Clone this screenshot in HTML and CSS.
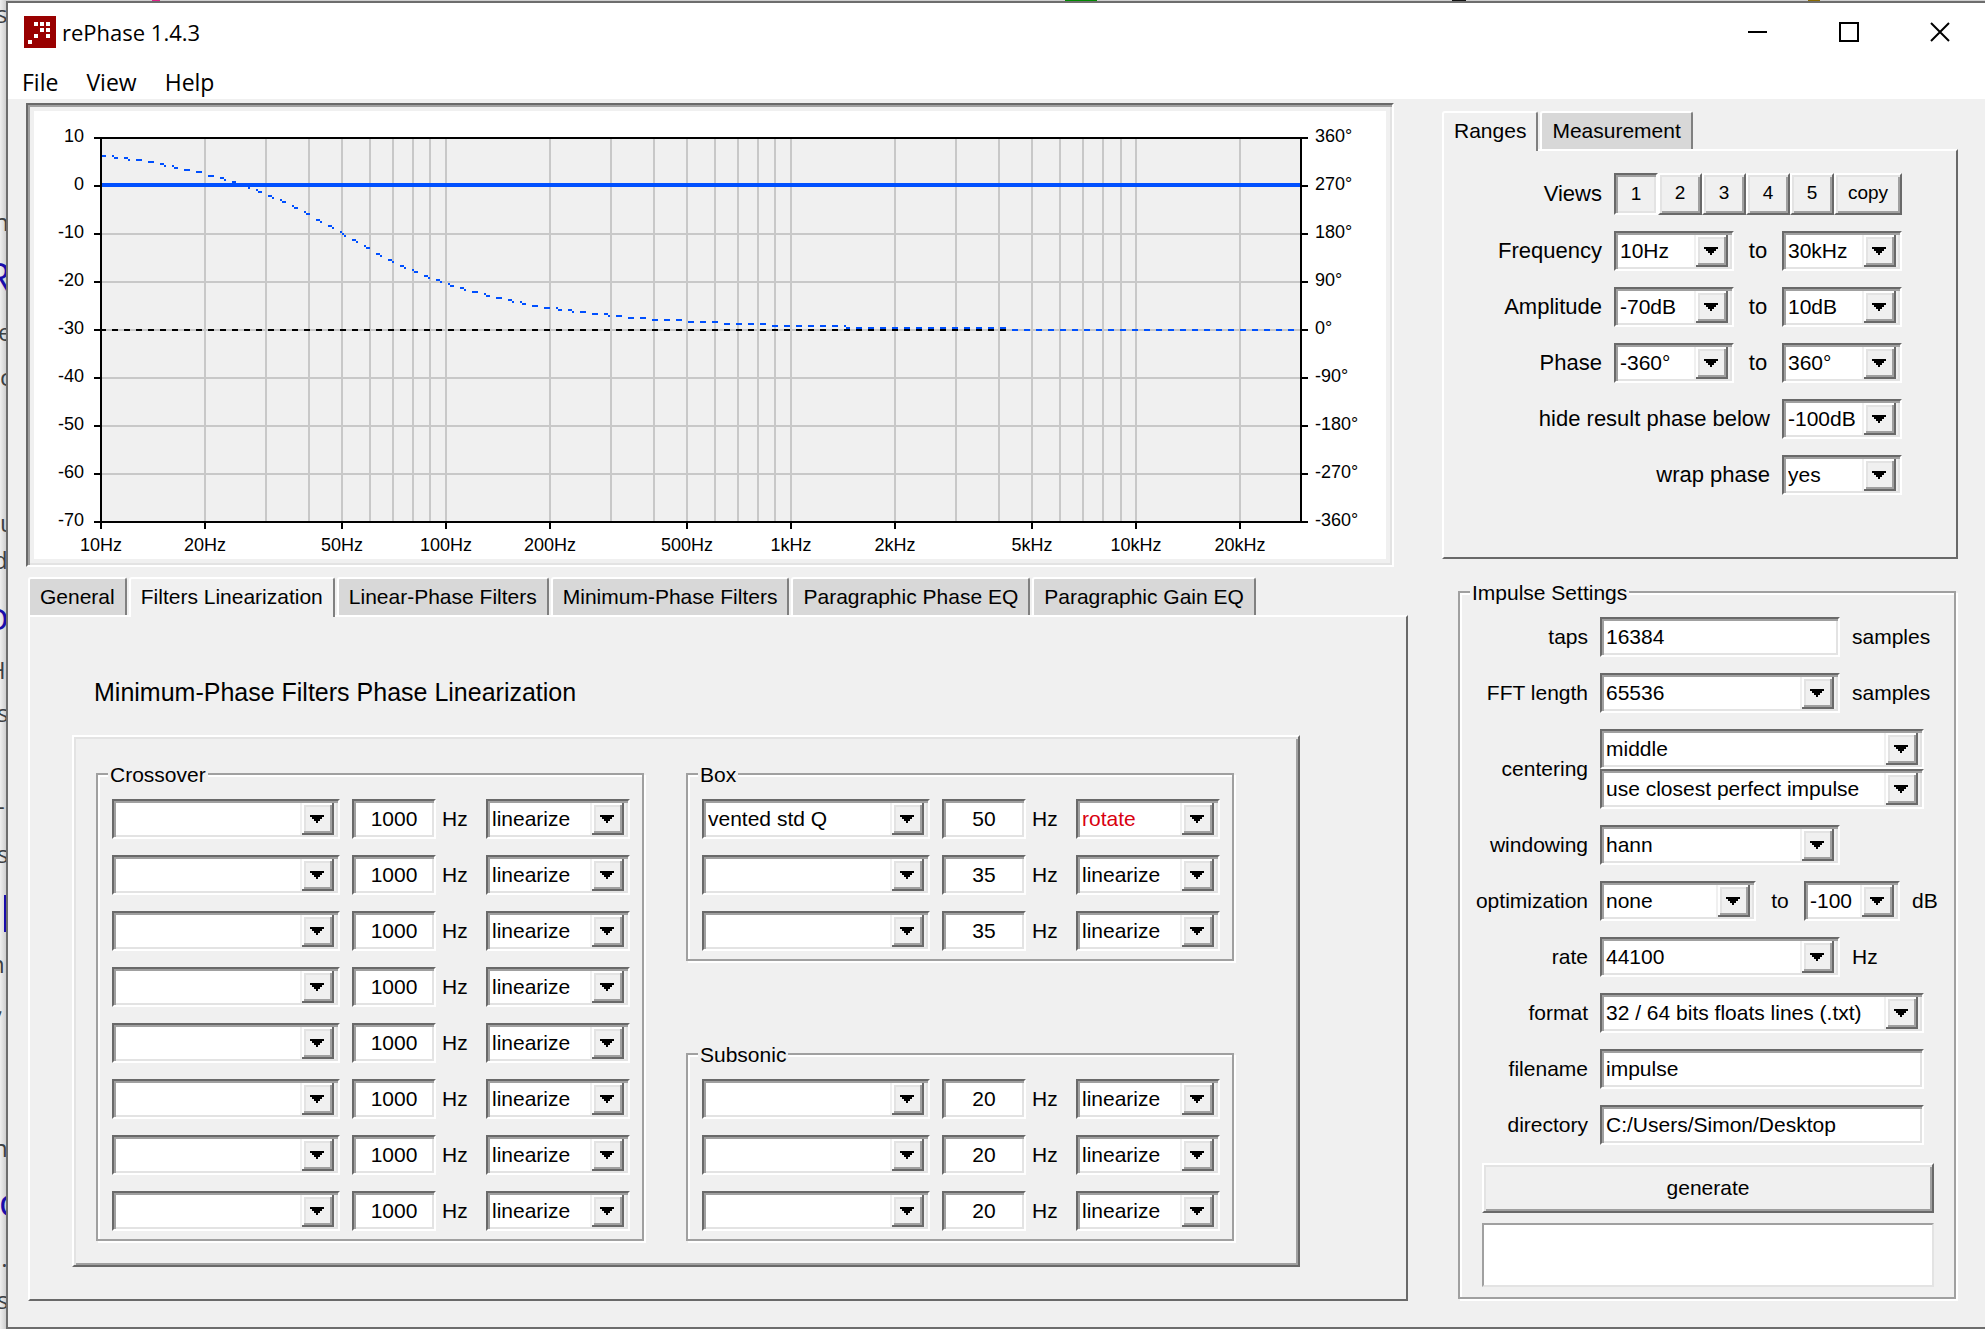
FILE: index.html
```html
<!DOCTYPE html>
<html lang="en">
<head>
  <meta charset="UTF-8" />
  <title>rePhase 1.4.3</title>
  <meta name="viewport" content="width=device-width, initial-scale=1.0"/>
  <link rel="stylesheet" href="styles.css">
</head>
<body>
  <!-- page behind the window -->
  <svg class="backdrop" aria-hidden="true">
    <rect x="152" y="0" width="8" height="3" fill="#e0218a"/>
    <rect x="1065" y="0" width="32" height="3" fill="#008a00"/>
    <rect x="1452" y="0" width="14" height="3" fill="#111"/>
    <rect x="1808" y="0" width="12" height="3" fill="#8a6a00"/>
    <g class="behind-text">
      <text x="-4" y="23">s</text>
      <text x="-6" y="231">n</text>
      <text x="-2" y="341">e</text>
      <text x="0" y="386">c</text>
      <text x="0" y="532">u</text>
      <text x="-7" y="569">d</text>
      <text x="-12" y="679">H</text>
      <text x="-3" y="722">s</text>
      <text x="-3" y="815">-</text>
      <text x="-3" y="863">s</text>
      <text x="-10" y="973">n</text>
      <text x="-3" y="1014">,</text>
      <text x="-7" y="1157">n</text>
      <text x="-5" y="1267">..</text>
      <text x="-3" y="1309">s</text>
    </g>
    <g class="behind-link">
      <text x="-13" y="291">R</text>
      <text x="-14" y="630">o</text>
      <text x="-1" y="1216">c</text>
      <rect x="4" y="895" width="3" height="37"/>
    </g>
  </svg>

  <div class="window">
    <header class="titlebar">
      <svg class="logo" width="32" height="32" viewBox="0 0 32 32" shape-rendering="crispEdges" aria-hidden="true">
        <rect width="32" height="32" fill="#990000"/>
        <path fill="#fff" d="M10 6h4v4h-4zM16 6h4v4h-4zM22 6h4v4h-4zM16 12h4v4h-4zM22 12h4v4h-4zM10 18h4v4h-4zM22 18h4v4h-4zM4 24h4v4H4z"/>
      </svg>
      <span class="app-name">rePhase 1.4.3</span>
      <div class="window-buttons">
        <button type="button" aria-label="Minimize"><svg width="20" height="20"><path d="M0 10H19" stroke="#000" stroke-width="2"/></svg></button>
        <button type="button" aria-label="Maximize"><svg width="20" height="20"><rect x="1" y="1" width="18" height="18" fill="none" stroke="#000" stroke-width="2"/></svg></button>
        <button type="button" aria-label="Close"><svg width="20" height="20"><path d="M1 1L19 19M19 1L1 19" stroke="#000" stroke-width="2"/></svg></button>
      </div>
    </header>

    <nav class="menubar">
      <button type="button">File</button>
      <button type="button">View</button>
      <button type="button">Help</button>
    </nav>

    <main class="content">
      <div class="left">
        <div class="chart-frame">
          <svg id="chart" viewBox="0 0 1352 448" role="img" aria-label="Amplitude and phase response"></svg>
        </div>

        <div class="tabs">
          <button type="button" class="tab">General</button>
          <button type="button" class="tab active">Filters Linearization</button>
          <button type="button" class="tab">Linear-Phase Filters</button>
          <button type="button" class="tab">Minimum-Phase Filters</button>
          <button type="button" class="tab">Paragraphic Phase EQ</button>
          <button type="button" class="tab">Paragraphic Gain EQ</button>
        </div>
        <section class="panel filters-panel">
          <h2>Minimum-Phase Filters Phase Linearization</h2>
          <div class="filters">
            <fieldset class="group" id="crossover"><legend>Crossover</legend></fieldset>
            <div class="filters-side">
              <fieldset class="group" id="box"><legend>Box</legend></fieldset>
              <fieldset class="group" id="subsonic"><legend>Subsonic</legend></fieldset>
            </div>
          </div>
        </section>
      </div>

      <div class="right">
        <div class="tabs">
          <button type="button" class="tab active">Ranges</button>
          <button type="button" class="tab">Measurement</button>
        </div>
        <section class="panel ranges-panel">
          <div class="range-row">
            <span>Views</span>
            <div class="views">
              <button type="button" class="pressed">1</button>
              <button type="button">2</button>
              <button type="button">3</button>
              <button type="button">4</button>
              <button type="button">5</button>
              <button type="button" class="copy">copy</button>
            </div>
          </div>
          <div class="range-row">
            <label for="freq-min">Frequency</label>
            <select id="freq-min"><option>10Hz</option></select>
            <label class="to" for="freq-max">to</label>
            <select id="freq-max"><option>30kHz</option></select>
          </div>
          <div class="range-row">
            <label for="amp-min">Amplitude</label>
            <select id="amp-min"><option>-70dB</option></select>
            <label class="to" for="amp-max">to</label>
            <select id="amp-max"><option>10dB</option></select>
          </div>
          <div class="range-row">
            <label for="phase-min">Phase</label>
            <select id="phase-min"><option>-360°</option></select>
            <label class="to" for="phase-max">to</label>
            <select id="phase-max"><option>360°</option></select>
          </div>
          <div class="range-row">
            <label for="hide-below">hide result phase below</label>
            <select id="hide-below"><option>-100dB</option></select>
          </div>
          <div class="range-row">
            <label for="wrap">wrap phase</label>
            <select id="wrap"><option>yes</option><option>no</option></select>
          </div>
        </section>

        <fieldset class="group impulse">
          <legend>Impulse Settings</legend>
          <div class="setting">
            <label for="taps">taps</label>
            <input type="text" id="taps" class="medium" value="16384" />
            <span>samples</span>
          </div>
          <div class="setting">
            <label for="fft">FFT length</label>
            <select id="fft" class="medium"><option>65536</option></select>
            <span>samples</span>
          </div>
          <div class="setting">
            <label for="centering">centering</label>
            <div class="stack">
              <select id="centering" class="wide"><option>middle</option></select>
              <select class="wide" aria-label="centering mode"><option>use closest perfect impulse</option></select>
            </div>
          </div>
          <div class="setting">
            <label for="windowing">windowing</label>
            <select id="windowing" class="medium"><option>hann</option></select>
          </div>
          <div class="setting optimization">
            <label for="optimization">optimization</label>
            <select id="optimization" class="opt"><option>none</option></select>
            <label class="to" for="opt-level">to</label>
            <select id="opt-level" class="level"><option>-100</option></select>
            <span>dB</span>
          </div>
          <div class="setting">
            <label for="rate">rate</label>
            <select id="rate" class="medium"><option>44100</option></select>
            <span>Hz</span>
          </div>
          <div class="setting">
            <label for="format">format</label>
            <select id="format" class="wide"><option>32 / 64 bits floats lines (.txt)</option></select>
          </div>
          <div class="setting">
            <label for="filename">filename</label>
            <input type="text" id="filename" class="wide" value="impulse" />
          </div>
          <div class="setting">
            <label for="directory">directory</label>
            <input type="text" id="directory" class="wide" value="C:/Users/Simon/Desktop" />
          </div>
          <button type="button" class="generate">generate</button>
          <textarea class="output" aria-label="output" readonly></textarea>
        </fieldset>
      </div>
    </main>
  </div>

<script src="script.js"></script>
</body>
</html>
```

FILE: styles.css
```css
* {
  box-sizing: border-box;
}

body {
  margin: 0;
  padding: 1px 0 0 6px;
  background: #e6e6e6;
  color: #000;
  font-family: "Liberation Sans", Arial, sans-serif;
  font-size: 21px;
  line-height: 24px;
}

button,
input,
select,
textarea {
  font: inherit;
  color: inherit;
  border-radius: 0;
  margin: 0;
}

.backdrop {
  position: absolute;
  left: 0;
  top: 0;
  width: 100%;
  height: 100%;
  background: linear-gradient(to right, #efefef, #cfcfcf 6px);
  z-index: -1;
}

.behind-text {
  font: 24px "Open Sans", sans-serif;
  fill: #3c4043;
}

.behind-link {
  font: 38px "Open Sans", sans-serif;
  fill: #1a0dab;
}

.window {
  background: #f0f0f0;
  border: 2px solid #6d6d6d;
  border-right: none;
}

/* title bar and menu */
.titlebar {
  display: flex;
  align-items: center;
  height: 58px;
  padding-left: 16px;
  background: #fff;
}

.app-name {
  flex: 1;
  margin-left: 6px;
  font-family: "Open Sans", sans-serif;
  font-size: 22px;
}

.window-buttons {
  display: flex;
}

.window-buttons button {
  display: flex;
  align-items: center;
  justify-content: center;
  width: 91px;
  height: 56px;
  padding: 0;
  border: none;
  background: none;
}

.menubar {
  display: flex;
  gap: 28px;
  padding: 4px 0 0 14px;
  background: #fff;
}

.menubar button {
  padding: 0;
  border: none;
  background: none;
  font-family: "Open Sans", sans-serif;
  font-size: 23px;
  line-height: 34px;
}

.content {
  display: grid;
  grid-template-columns: minmax(0, 1fr) 516px;
  gap: 34px;
  padding: 4px 27px 26px 18px;
}

/* chart */
.chart-frame {
  margin-right: 14px;
  margin-bottom: 10px;
  padding: 4px;
  border: 2px solid;
  border-color: #696969 #fff #fff #696969;
  box-shadow: inset 2px 2px #a0a0a0, inset -2px -2px #e3e3e3;
}

#chart {
  display: block;
  width: 100%;
  border: 2px solid #f0f0f0;
  background: #fff;
  font-size: 18px;
}

/* tabs */
.tabs {
  display: flex;
  gap: 2px;
}

.tab {
  height: 38px;
  padding: 0 10px;
  border: 2px solid;
  border-color: #fff #808080 #fff #fff;
  border-bottom: none;
  border-radius: 3px 3px 0 0;
  background: #d8d8d8;
  white-space: nowrap;
}

.tab.active {
  position: relative;
  height: 40px;
  margin-bottom: -2px;
  padding-bottom: 2px;
  background: #f0f0f0;
}

.panel {
  border: 2px solid;
  border-color: #fff #696969 #696969 #fff;
}

.left .tabs,
.filters-panel {
  margin-left: 2px;
}

.filters-panel {
  padding: 60px 106px 32px 42px;
}

.filters-panel h2 {
  margin: 0 0 28px 22px;
  font-size: 25px;
  font-weight: normal;
  line-height: 30px;
}

.filters {
  display: grid;
  grid-template-columns: repeat(2, minmax(0, 1fr));
  gap: 42px;
  padding: 36px 64px 24px 22px;
  border: 2px solid;
  border-color: #fff #696969 #696969 #fff;
  box-shadow: inset 2px 2px #e3e3e3, inset -2px -2px #a0a0a0;
}

.filters-side {
  display: flex;
  flex-direction: column;
  justify-content: space-between;
}

/* etched group boxes */
.group {
  position: relative;
  display: flex;
  flex-direction: column;
  gap: 16px;
  min-width: 0;
  margin: 0;
  padding: 24px 12px 8px 14px;
  border: 2px solid #a0a0a0;
  box-shadow: 2px 2px #fff, inset 2px 2px #fff;
}

.group legend {
  position: absolute;
  top: -12px;
  left: 10px;
  padding: 0 2px;
  background: #f0f0f0;
}

/* form controls */
select,
input {
  height: 40px;
  border: 2px solid;
  border-color: #696969 #fff #fff #696969;
  background-color: #fff;
  box-shadow: inset 2px 2px #a0a0a0, inset -2px -2px #e3e3e3;
}

input {
  padding: 0 4px;
}

select {
  appearance: none;
  width: 120px;
  padding: 0 38px 0 4px;
  background-image: url("data:image/svg+xml,%3Csvg xmlns='http://www.w3.org/2000/svg' width='36' height='32' shape-rendering='crispEdges'%3E%3Cpath fill='%23f0f0f0' d='M0 0h36v32H0z'/%3E%3Cpath fill='%23696969' d='M2 0h32v32H2z'/%3E%3Cpath fill='%23fff' d='M2 0h30v30H2z'/%3E%3Cpath fill='%23a0a0a0' d='M4 2h28v28H4z'/%3E%3Cpath fill='%23e3e3e3' d='M4 2h26v26H4z'/%3E%3Cpath fill='%23f0f0f0' d='M6 4h24v24H6z'/%3E%3Cpath d='M10 12h14v2H10zM12 14h10v2H12zM14 16h6v2h-6zM16 18h2v2h-2z'/%3E%3C/svg%3E");
  background-repeat: no-repeat;
  background-position: right 2px top 2px;
}

.filter-row {
  display: flex;
  align-items: center;
}

.filter-row .type {
  flex: 1;
  min-width: 0;
  margin-right: 12px;
}

.filter-row .freq {
  width: 84px;
  text-align: center;
}

.filter-row .unit {
  width: 50px;
  padding-left: 6px;
}

.filter-row .mode {
  width: 144px;
}

.filter-row .rotate {
  color: #d9000f;
}

/* ranges */
.right {
  padding-top: 8px;
}

.ranges-panel {
  display: flex;
  flex-direction: column;
  gap: 16px;
  margin-bottom: 32px;
  padding: 22px 54px 62px 0;
}

.range-row {
  display: flex;
  align-items: center;
  justify-content: flex-end;
  gap: 12px;
  font-size: 22px;
}

.range-row select {
  font-size: 21px;
}

.range-row .to {
  width: 24px;
  text-align: center;
}

.views {
  display: flex;
}

.views button,
.generate {
  border: 2px solid;
  border-color: #fff #696969 #696969 #fff;
  background: #f0f0f0;
  box-shadow: inset 2px 2px #e3e3e3, inset -2px -2px #a0a0a0;
}

.views button {
  width: 44px;
  height: 42px;
  padding: 0 0 3px;
  font-size: 19px;
}

.views .copy {
  width: 68px;
}

.views .pressed {
  padding: 0;
  border-color: #696969 #fff #fff #696969;
  box-shadow: inset 2px 2px #a0a0a0, inset -2px -2px #e3e3e3;
}

/* impulse settings */
.impulse {
  margin: 0 2px 0 16px;
  padding: 24px 8px 10px;
}

.setting {
  display: flex;
  align-items: center;
  gap: 12px;
}

.setting > label:first-child {
  width: 120px;
  text-align: right;
}

.setting .to {
  width: 24px;
  text-align: center;
}

.setting .medium {
  width: 240px;
}

.setting .wide {
  width: 324px;
}

.setting .opt {
  width: 156px;
}

.setting .level {
  width: 96px;
}

.stack {
  display: flex;
  flex-direction: column;
}

.generate {
  height: 50px;
  margin: 2px 12px 0 14px;
}

.output {
  height: 64px;
  margin: -6px 12px 0 14px;
  border: 2px solid;
  border-color: #a0a0a0 #e3e3e3 #e3e3e3 #a0a0a0;
  background: #fff;
  resize: none;
}
```

FILE: script.js
```js
// filter rows: [type, frequency, mode]
const filters = {
  crossover: Array(8).fill(["", 1000, "linearize"]),
  box: [["vented std Q", 50, "rotate"], ["", 35, "linearize"], ["", 35, "linearize"]],
  subsonic: Array(3).fill(["", 20, "linearize"]),
};

for (const id in filters) {
  const group = document.getElementById(id);
  filters[id].forEach(([type, freq, mode], i) => {
    const n = `${id}-${i + 1}`;
    group.insertAdjacentHTML("beforeend", `
      <div class="filter-row">
        <select class="type" aria-label="${n} type"><option>${type}</option></select>
        <input type="text" class="freq" id="${n}-freq" value="${freq}" />
        <label class="unit" for="${n}-freq">Hz</label>
        <select class="mode ${mode}" aria-label="${n} mode"><option>${mode}</option></select>
      </div>`);
  });
}

// chart
const LEFT = 67, RIGHT = 1267, TOP = 27, STEP = 48;
const DECADE = (RIGHT - LEFT) / Math.log10(3000);
const xOf = (f) => Math.round(LEFT + DECADE * Math.log10(f / 10));
const rect = (x, y, w, h, fill) => `<rect x="${x}" y="${y}" width="${w}" height="${h}" fill="${fill}"/>`;
const text = (x, y, anchor, s) => `<text x="${x}" y="${y}" text-anchor="${anchor}">${s}</text>`;

const bottom = TOP + 8 * STEP;
let out = rect(LEFT, TOP, RIGHT - LEFT, bottom - TOP, "#f0f0f0");

for (let d = 10; d < 30000; d *= 10) {
  for (let k = 1; k < 10; k++) {
    const f = d * k;
    if (f > 10 && f < 30000) out += rect(xOf(f) - 1, TOP, 2, bottom - TOP, "#c8c8c8");
  }
}
for (let i = 1; i < 8; i++) out += rect(LEFT, TOP + i * STEP - 1, RIGHT - LEFT, 2, "#c8c8c8");

// zero phase reference, dashed
const zero = TOP + 4 * STEP;
for (let x = LEFT - 1; x < RIGHT; x += 12) {
  if (x < 975) out += rect(x, zero - 1, 6, 2, "#000");
}

// phase of the vented box, rotated
for (let x = LEFT + 1; x < RIGHT - 1; x += 2) {
  if ((x - LEFT + 1) % 12 >= 6) continue;
  const w = 10 * Math.pow(10, (x - LEFT) / DECADE) / 50;
  const phase = 360 - 2 * Math.atan2(Math.SQRT2 * w, 1 - w * w) * 180 / Math.PI;
  const y = zero - phase * STEP / 90;
  out += rect(x, 2 * Math.floor(y / 2), 2, 2, "#0050ff");
}

// amplitude
out += rect(LEFT, TOP + STEP - 3, RIGHT - LEFT, 4, "#0050ff");

// axes
out += rect(LEFT - 1, TOP - 1, 2, bottom - TOP + 2, "#000");
out += rect(RIGHT - 1, TOP - 1, 2, bottom - TOP + 2, "#000");
out += rect(LEFT, TOP - 1, RIGHT - LEFT, 2, "#000");
out += rect(LEFT, bottom - 1, RIGHT - LEFT, 2, "#000");

for (let i = 0; i <= 8; i++) {
  const y = TOP + i * STEP;
  out += rect(LEFT - 7, y - 1, 6, 2, "#000") + rect(RIGHT + 1, y - 1, 6, 2, "#000");
  out += text(LEFT - 17, y + 4, "end", 10 - 10 * i);
  out += text(RIGHT + 14, y + 4, "start", 360 - 90 * i + "°");
}
for (const f of [10, 20, 50, 100, 200, 500, 1000, 2000, 5000, 10000, 20000]) {
  out += rect(xOf(f) - 1, bottom + 1, 2, 6, "#000");
  out += text(xOf(f), bottom + 29, "middle", f < 1000 ? f + "Hz" : f / 1000 + "kHz");
}

document.getElementById("chart").innerHTML = `<g shape-rendering="crispEdges">${out}</g>`;
```
